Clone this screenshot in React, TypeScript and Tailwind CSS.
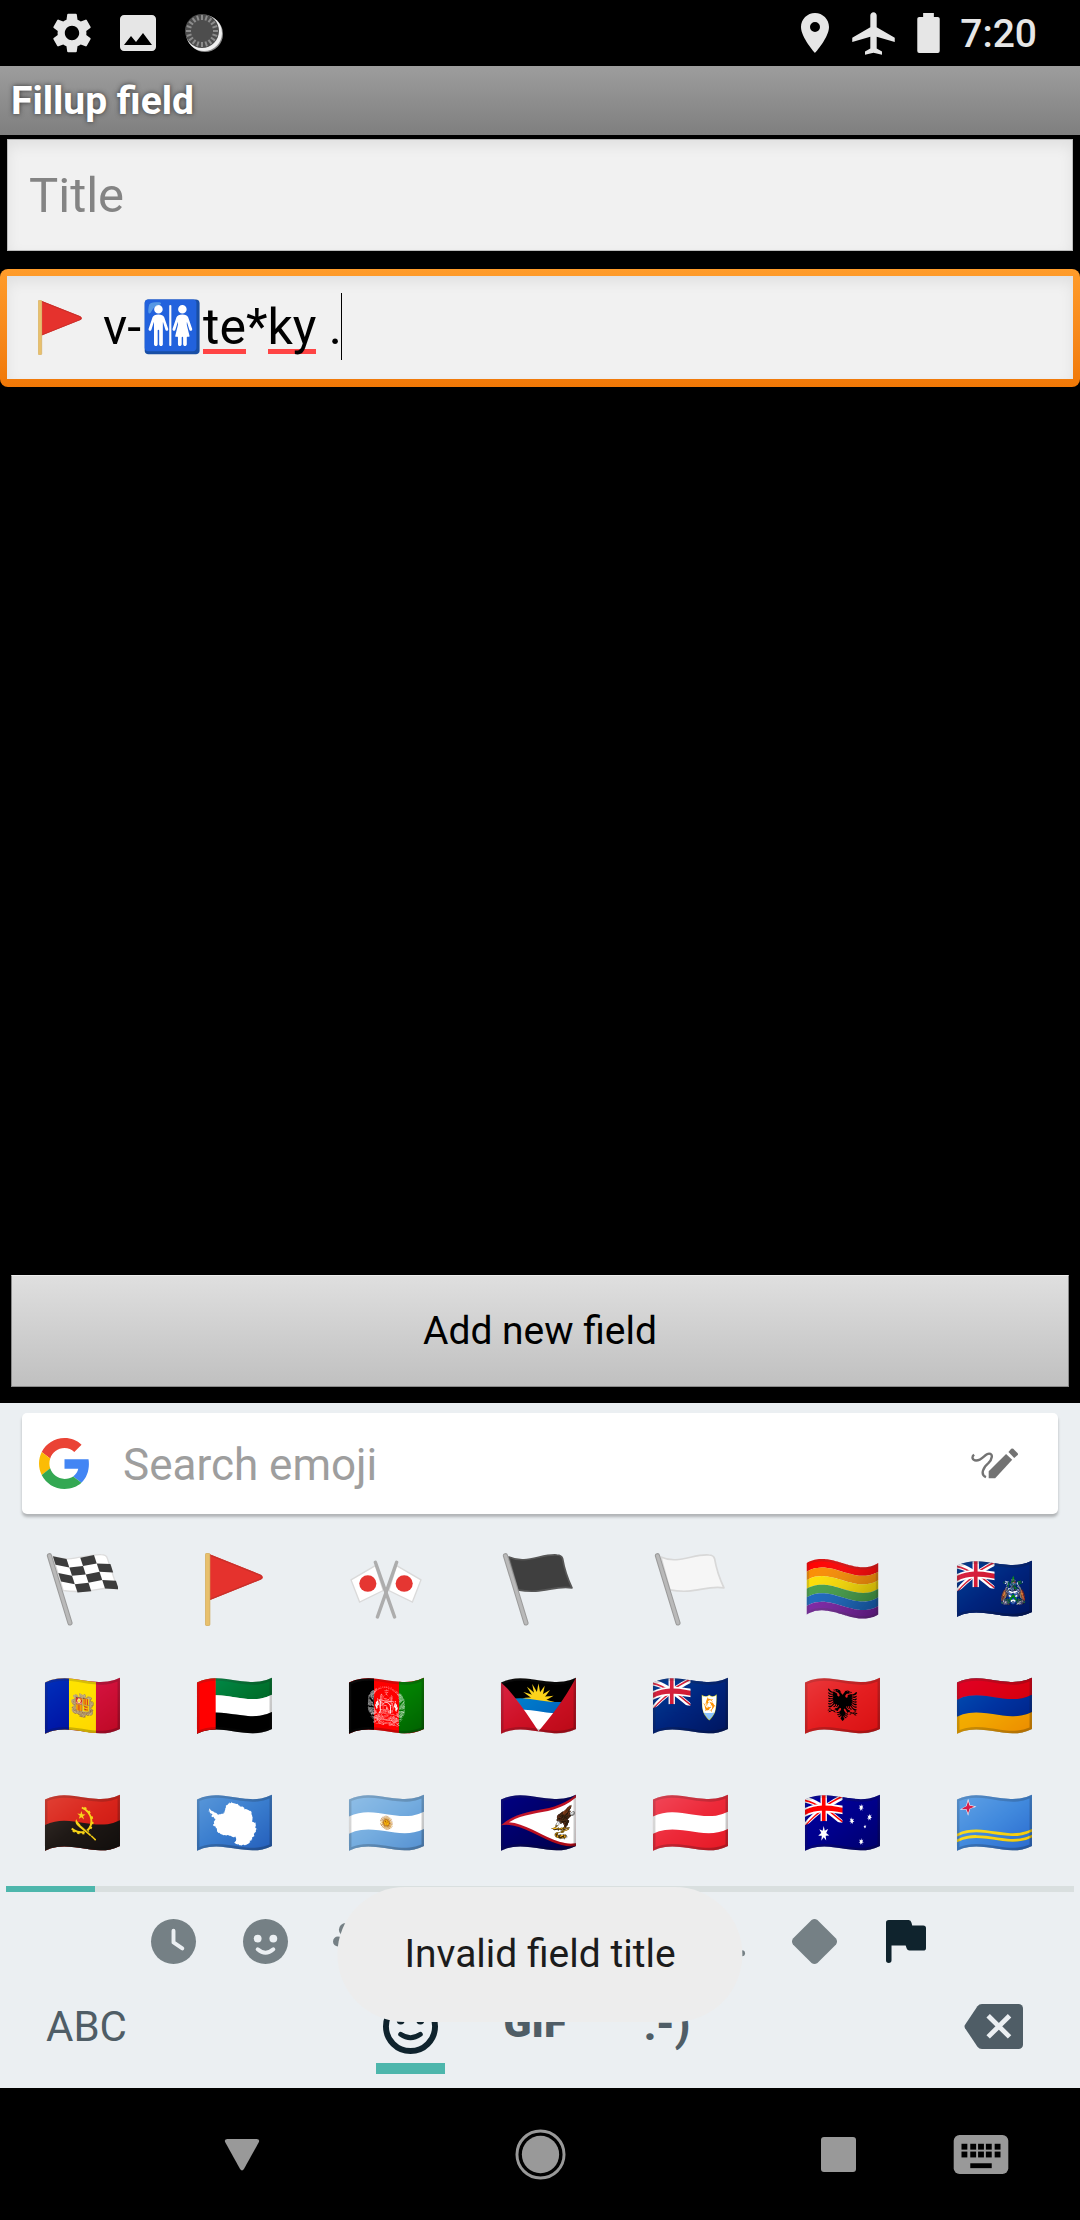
import type { ReactNode } from "react";
import { MdSettings, MdImage, MdLocationOn, MdAirplanemodeActive } from "react-icons/md";

function SpinnerIcon() {
  const ticks = Array.from({ length: 20 }, (_, i) => i * 18);
  return (
    <svg className="ml-[4px] h-[40px] w-[40px]" viewBox="0 0 40 40" aria-hidden="true">
      <circle cx="21" cy="21" r="18" fill="#8a8a8a" />
      <circle cx="20" cy="20" r="18" fill="#f0f0f0" />
      <circle cx="18" cy="18" r="17" fill="#4d4d4d" />
      {ticks.map((a) => (
        <line key={a} x1="18" y1="2" x2="18" y2="7" stroke="#8c8c8c" strokeWidth="2" transform={`rotate(${a} 18 18)`} />
      ))}
    </svg>
  );
}

function RedFlag({ className }: { className: string }) {
  return (
    <svg className={className} viewBox="0 0 166 216" preserveAspectRatio="none" aria-hidden="true">
      <path d="M14 4 L159 64 Q166 68 166 72 Q166 77 159 79 L14 139Z" fill="#e5322d" />
      <path d="M14 6 L159 66 Q164 71 159 77 L14 137" fill="none" stroke="#c9302b" strokeWidth="4" />
      <rect x="1" y="1" width="13" height="214" rx="4" fill="#e8c06c" stroke="#cfa552" strokeWidth="2" />
    </svg>
  );
}

function Pole() {
  return (
    <>
      <path d="M10 8 L70 209" stroke="#9b9b9b" strokeWidth="15" strokeLinecap="round" />
      <path d="M10 8 L70 209" stroke="#b9b9b9" strokeWidth="9" strokeLinecap="round" />
    </>
  );
}

function PoleFlag({ fill, edge }: { fill: string; edge: string }) {
  return (
    <svg className="h-[73px] w-[72px]" viewBox="0 0 210 218" preserveAspectRatio="none" aria-hidden="true">
      <path
        d="M20 12 C70 35 115 2 160 6 Q174 6 177 18 Q184 60 204 104 C150 95 120 125 46 110Z"
        fill={fill}
        stroke={edge}
        strokeWidth="5"
        strokeLinejoin="round"
      />
      <Pole />
    </svg>
  );
}

const wave = [10, 18, 14, 6, 8];

function CheckeredFlag() {
  const point = (u: number, v: number) => `${20 + 40 * u + 8 * v},${wave[u] + 25 * v}`;
  const cells = Array.from({ length: 16 }, (_, i) => ({ u: i % 4, v: Math.floor(i / 4) })).filter(
    ({ u, v }) => (u + v) % 2 === 0,
  );
  return (
    <svg className="h-[73px] w-[72px]" viewBox="0 0 210 218" preserveAspectRatio="none" aria-hidden="true">
      <path
        d="M20 10 C70 30 115 3 160 5 Q176 5 179 16 L209 108 C165 95 130 125 50 112Z"
        fill="#fff"
        stroke="#dcdcdc"
        strokeWidth="4"
      />
      {cells.map(({ u, v }) => (
        <polygon
          key={`${u}-${v}`}
          fill="#3c3c3c"
          points={`${point(u, v)} ${point(u + 1, v)} ${point(u + 1, v + 1)} ${point(u, v + 1)}`}
        />
      ))}
      <Pole />
    </svg>
  );
}

function CrossedFlags() {
  return (
    <svg className="h-[59px] w-[72px]" viewBox="0 0 210 178" preserveAspectRatio="none" aria-hidden="true">
      <path d="M74 17L3 60L28 127L97 92Z" fill="#fff" stroke="#dadada" strokeWidth="4" />
      <path d="M136 17L207 60L182 127L113 92Z" fill="#fff" stroke="#dadada" strokeWidth="4" />
      <circle cx="52" cy="71" r="25" fill="#e53632" />
      <circle cx="158" cy="71" r="25" fill="#e53632" />
      <path d="M136 7L80 172" stroke="#adadad" strokeWidth="10" strokeLinecap="round" />
      <path d="M74 7L130 172" stroke="#adadad" strokeWidth="10" strokeLinecap="round" />
    </svg>
  );
}

const emojis: { name: string; art: ReactNode }[] = [
  { name: "Chequered flag", art: <CheckeredFlag /> },
  { name: "Triangular flag", art: <RedFlag className="h-[73px] w-[58px]" /> },
  { name: "Crossed flags", art: <CrossedFlags /> },
  { name: "Black flag", art: <PoleFlag fill="#3f3f3f" edge="#575757" /> },
  { name: "White flag", art: <PoleFlag fill="#f6f6f6" edge="#d8d8d8" /> },
  { name: "Rainbow flag", art: "🏳️‍🌈" },
  { name: "Ascension Island", art: "🇦🇨" },
  { name: "Andorra", art: "🇦🇩" },
  { name: "United Arab Emirates", art: "🇦🇪" },
  { name: "Afghanistan", art: "🇦🇫" },
  { name: "Antigua and Barbuda", art: "🇦🇬" },
  { name: "Anguilla", art: "🇦🇮" },
  { name: "Albania", art: "🇦🇱" },
  { name: "Armenia", art: "🇦🇲" },
  { name: "Angola", art: "🇦🇴" },
  { name: "Antarctica", art: "🇦🇶" },
  { name: "Argentina", art: "🇦🇷" },
  { name: "American Samoa", art: "🇦🇸" },
  { name: "Austria", art: "🇦🇹" },
  { name: "Australia", art: "🇦🇺" },
  { name: "Aruba", art: "🇦🇼" },
];

function Cat({ children }: { children: ReactNode }) {
  return (
    <svg className="h-[45px] w-[45px] overflow-visible" viewBox="0 0 46 46" fill="#758085" aria-hidden="true">
      {children}
    </svg>
  );
}

const categories: { name: string; art: ReactNode }[] = [
  {
    name: "Recent",
    art: (
      <Cat>
        <circle cx="23" cy="23" r="23" />
        <path d="M23 12 V24 L32 30" fill="none" stroke="#ebeff2" strokeWidth="4" strokeLinecap="round" strokeLinejoin="round" />
      </Cat>
    ),
  },
  {
    name: "Smileys",
    art: (
      <Cat>
        <circle cx="23" cy="23" r="23" />
        <circle cx="15" cy="20" r="4" fill="#ebeff2" />
        <circle cx="31" cy="20" r="4" fill="#ebeff2" />
        <path d="M15 31 Q23 38 31 31" fill="none" stroke="#ebeff2" strokeWidth="4" strokeLinecap="round" />
      </Cat>
    ),
  },
  {
    name: "Animals",
    art: (
      <Cat>
        <circle cx="4" cy="23" r="5" />
        <circle cx="12" cy="11" r="7" />
        <circle cx="34" cy="11" r="7" />
        <circle cx="40" cy="23" r="5" />
        <ellipse cx="23" cy="33" rx="13" ry="10" />
      </Cat>
    ),
  },
  { name: "Food", art: <Cat><path d="M8 6H38V30Q38 40 28 40H18Q8 40 8 30Z" /></Cat> },
  { name: "Travel", art: <Cat><path d="M6 22L12 8H34L40 22V40H6Z" /></Cat> },
  { name: "Activities", art: <Cat><circle cx="23" cy="23" r="18" /></Cat> },
  {
    name: "Objects",
    art: (
      <Cat>
        <circle cx="23" cy="20" r="14" />
        <rect x="2" y="32" width="43" height="6" rx="3" />
      </Cat>
    ),
  },
  {
    name: "Symbols",
    art: (
      <Cat>
        <path d="M20 1 Q23 -1 26 1 L45 20 Q47 23 45 26 L26 45 Q23 47 20 45 L1 26 Q-1 23 1 20Z" />
      </Cat>
    ),
  },
  {
    name: "Flags",
    art: (
      <svg className="h-[43px] w-[40px]" viewBox="0 0 116 128" preserveAspectRatio="none" fill="#0f232d" aria-hidden="true">
        <path d="M8 0H66Q72 0 74 8L76 16H108Q116 16 116 24V84Q116 91 108 91H68Q62 91 60 85L57 76H16V120Q16 128 8 128T0 120V8Q0 0 8 0Z" />
      </svg>
    ),
  },
];

function GoogleLogo() {
  return (
    <svg className="h-[51px] w-[51px]" viewBox="0 0 48 48" aria-hidden="true">
      <path fill="#EA4335" d="M24 9.5c3.54 0 6.71 1.22 9.21 3.6l6.85-6.85C35.9 2.38 30.47 0 24 0 14.62 0 6.51 5.38 2.56 13.22l7.98 6.19C12.43 13.72 17.74 9.5 24 9.5z" />
      <path fill="#4285F4" d="M46.98 24.55c0-1.57-.15-3.09-.38-4.55H24v9.02h12.94c-.58 2.96-2.26 5.48-4.78 7.18l7.73 6c4.51-4.18 7.09-10.36 7.09-17.65z" />
      <path fill="#FBBC05" d="M10.53 28.59c-.48-1.45-.76-2.99-.76-4.59s.27-3.14.76-4.59l-7.98-6.19C.92 16.46 0 20.12 0 24c0 3.88.92 7.54 2.56 10.78l7.97-6.19z" />
      <path fill="#34A853" d="M24 48c6.48 0 11.93-2.13 15.89-5.81l-7.73-6c-2.15 1.45-4.92 2.3-8.16 2.3-6.26 0-11.57-4.22-13.47-9.91l-7.98 6.19C6.51 42.62 14.62 48 24 48z" />
    </svg>
  );
}

function StatusBar() {
  return (
    <header className="flex h-[66px] items-center pl-[48px] pr-[43px] text-[#e6e6e6]">
      <div className="flex items-center gap-[18px]">
        <MdSettings size={48} />
        <MdImage size={48} />
        <SpinnerIcon />
      </div>
      <div className="ml-auto flex items-center">
        <MdLocationOn size={48} />
        <MdAirplanemodeActive size={51} className="ml-[9px]" />
        <svg className="ml-[18px] h-[40px] w-[23px]" viewBox="0 0 23 41" fill="currentColor" aria-hidden="true">
          <path d="M6 0H17V4H21Q23 4 23 6V39Q23 41 21 41H2Q0 41 0 39V6Q0 4 2 4H6Z" />
        </svg>
        <span className="ml-[20px] pt-[2px] text-[39px] leading-[48px] font-medium">7:20</span>
      </div>
    </header>
  );
}

function Keyboard() {
  return (
    <section aria-label="Emoji keyboard" className="bg-[#ebeff2] pt-[10px] pb-[14px]">
      <div className="mx-[22px] flex h-[101px] items-center rounded-[5px] bg-white pl-[17px] pr-[40px] shadow-[0_3px_3px_rgba(0,0,0,0.25)]">
        <GoogleLogo />
        <input
          type="search"
          aria-label="Search emoji"
          placeholder="Search emoji"
          className="ml-[33px] min-w-0 flex-1 bg-transparent pt-[2px] text-[44px] text-black outline-none placeholder:text-[#9e9e9e]"
        />
        <button type="button" aria-label="Draw emoji">
          <svg className="h-[31px] w-[47px]" viewBox="0 0 138 90" fill="#737373" aria-hidden="true">
            <path d="M9 19C1 26 4 36 15 36C34 36 40 16 53 16C66 16 62 33 51 44C36 56 26 78 44 85" fill="none" stroke="#737373" strokeWidth="7" />
            <path d="M52 88V68L103 17L121 34L71 88Z" />
            <path d="M110 11L118 2Q121 0 124 2L137 15Q139 18 137 20L127 29Z" />
          </svg>
        </button>
      </div>

      <div className="mt-[27px] grid grid-cols-7 gap-y-[21px] pl-[6px] pr-[10px]">
        {emojis.map((e) => (
          <button
            key={e.name}
            type="button"
            aria-label={e.name}
            className="flex h-[96px] items-center justify-center text-[65px] leading-none"
          >
            {e.art}
          </button>
        ))}
      </div>

      <div className="mx-[6px] mt-[15px] h-[6px] bg-[#d9dfdf]">
        <div className="h-full w-1/12 bg-[#4db6ac]" />
      </div>

      <div className="mx-auto grid h-[98px] max-w-[824px] grid-cols-9">
        {categories.map((c) => (
          <button key={c.name} type="button" aria-label={c.name} className="flex items-center justify-center">
            {c.art}
          </button>
        ))}
      </div>

      <div className="flex h-[84px] text-[#4f5d66]">
        <button type="button" className="h-[73px] w-[346px] pl-[46px] text-left text-[42px]">
          ABC
        </button>
        <button type="button" aria-label="Emoji" className="flex w-[128px] flex-col items-center">
          <span className="flex h-[73px] items-center">
            <svg className="h-[55px] w-[55px]" viewBox="0 0 56 56" fill="none" stroke="#0f232d" aria-hidden="true">
              <circle cx="28" cy="28" r="25" strokeWidth="6" />
              <path d="M18 36Q28 43 38 36" strokeWidth="5" strokeLinecap="round" />
              <circle cx="18" cy="22" r="4" fill="#0f232d" stroke="none" />
              <circle cx="38" cy="22" r="4" fill="#0f232d" stroke="none" />
            </svg>
          </span>
          <span className="h-[11px] w-[69px] bg-[#4db6ac]" />
        </button>
        <button type="button" className="h-[73px] w-[122px] pb-[6px] text-[41px] font-black">
          GIF
        </button>
        <button type="button" className="h-[73px] w-[142px] pb-[6px] text-[46px] font-bold">
          :-)
        </button>
        <button type="button" aria-label="Backspace" className="mr-[57px] ml-auto flex h-[73px] items-center">
          <svg className="h-[45px] w-[59px]" viewBox="0 0 171 134" preserveAspectRatio="none" fill="#4f5d66" aria-hidden="true">
            <path d="M52 0H158A13 13 0 0 1 171 13V121A13 13 0 0 1 158 134H52Q44 134 39 127L3 72Q0 67 3 62L39 7Q44 0 52 0Z" />
            <path d="M70 35L132 98M132 35L70 98" stroke="#ebeff2" strokeWidth="14" />
          </svg>
        </button>
      </div>
    </section>
  );
}

function NavBar() {
  return (
    <nav className="flex h-[132px] items-center pl-[142px]">
      <button type="button" aria-label="Back" className="mr-[98px] flex w-[200px] justify-center">
        <svg className="h-[33px] w-[38px]" viewBox="0 0 38 34" fill="#999" aria-hidden="true">
          <path d="M4 1H34Q38 1 36 5L21 32Q19 35 17 32L2 5Q0 1 4 1Z" />
        </svg>
      </button>
      <button type="button" aria-label="Home" className="mr-[98px] flex w-[200px] justify-center">
        <svg className="h-[51px] w-[51px]" viewBox="0 0 52 52" aria-hidden="true">
          <circle cx="26" cy="26" r="24" fill="none" stroke="#999" strokeWidth="3" />
          <circle cx="26" cy="26" r="19" fill="#999" />
        </svg>
      </button>
      <button type="button" aria-label="Recent apps" className="flex w-[200px] justify-center">
        <span className="h-[35px] w-[35px] rounded-[3px] bg-[#999]" />
      </button>
      <button type="button" aria-label="Switch keyboard" className="flex w-[86px] justify-center">
        <svg className="h-[39px] w-[56px]" viewBox="0 0 56 40" aria-hidden="true">
          <rect width="56" height="40" rx="6" fill="#999" />
          {[8, 17, 25, 33, 42].map((x) => (
            <g key={x}>
              <rect x={x} y="9" width="6" height="6" />
              <rect x={x} y="17" width="6" height="6" />
            </g>
          ))}
          <rect x="17" y="29" width="22" height="5" />
        </svg>
      </button>
    </nav>
  );
}

export default function App() {
  return (
    <div className="relative flex min-h-screen flex-col bg-black font-[Roboto,sans-serif]">
      <StatusBar />
      <h1 className="bg-linear-to-b from-[#9d9d9d] to-[#7f7f7f] pt-[11px] pb-[10px] pl-[11px] text-[39px] leading-[48px] font-bold text-white [text-shadow:0_0_5px_#333]">
        Fillup field
      </h1>

      <main className="flex flex-1 flex-col">
        <input
          type="text"
          aria-label="Title"
          placeholder="Title"
          className="mx-[7px] mt-[4px] h-[112px] border border-[#bbb] bg-[#f1f1f1] px-[21px] text-[49px] text-black shadow-[inset_0_6px_14px_rgba(0,0,0,0.07)] outline-none placeholder:text-[#848484]"
        />

        <div className="mt-[18px] rounded-[8px] bg-linear-to-b from-[#ff9c2a] to-[#f07806] px-[7px] pt-[7px] pb-[8px]">
          <div className="flex h-[103px] items-center bg-[#f1f1f1] pl-[31px] shadow-[inset_0_6px_14px_rgba(0,0,0,0.07)]">
            <RedFlag className="h-[55px] w-[44px] shrink-0" />
            <div className="relative ml-[21px] flex-1">
              <span className="absolute top-[56px] left-[100px] h-[5px] w-[43px] bg-[#ff4444]" />
              <span className="absolute top-[56px] left-[165px] h-[5px] w-[48px] bg-[#ff4444]" />
              <input
                type="text"
                aria-label="Field value"
                defaultValue="v-🚻te*ky ."
                className="relative block h-[70px] w-full bg-transparent text-[50px] text-black outline-none"
              />
              <span className="absolute top-0 left-[238px] h-[67px] w-px bg-black" />
            </div>
          </div>
        </div>

        <button
          type="button"
          className="mx-[11px] mt-auto mb-[16px] h-[112px] border border-[#8a8a8a] border-t-[#eee] bg-linear-to-b from-[#dfdfdf] to-[#c0c0c0] text-[39px] text-black"
        >
          Add new field
        </button>
      </main>

      <Keyboard />
      <NavBar />

      <div
        role="status"
        className="absolute bottom-[198px] left-1/2 flex h-[135px] -translate-x-1/2 items-center rounded-full bg-[#ededed] px-[67px] text-[39px] whitespace-nowrap text-[#1c1c1c]"
      >
        Invalid field title
      </div>
    </div>
  );
}
